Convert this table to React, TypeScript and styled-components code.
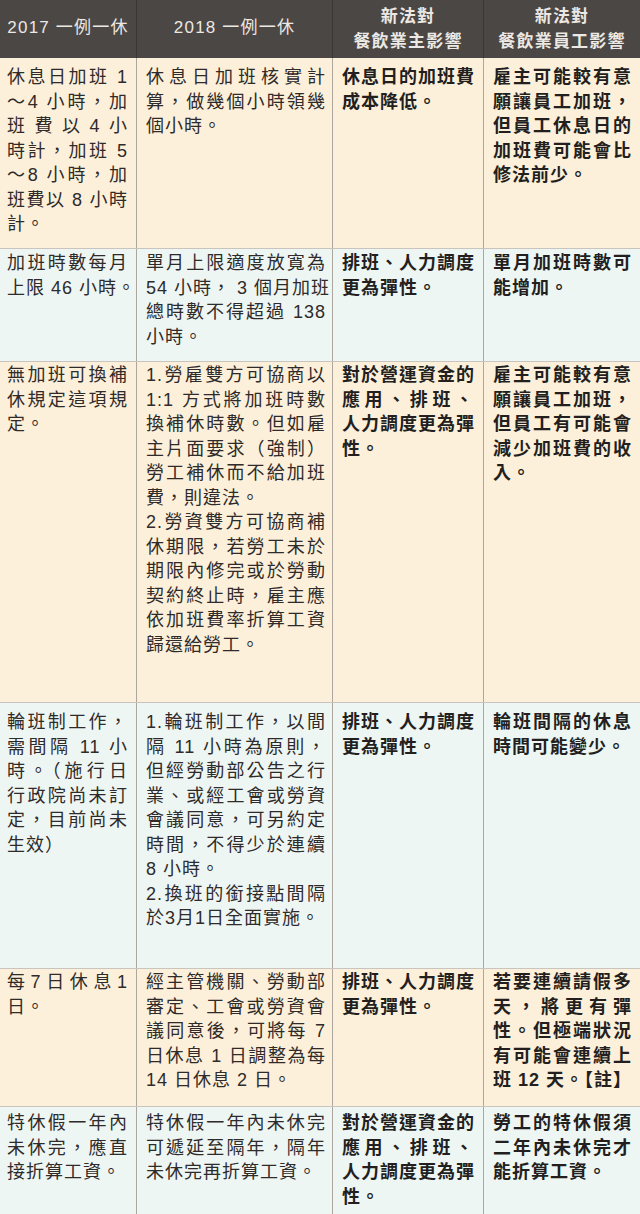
import React from "react";
import styled, { createGlobalStyle, css } from "styled-components";

const GlobalStyle = createGlobalStyle`
  html, body {
    margin: 0;
    padding: 0;
    background: #ffffff;
  }
  body {
    font-family: "Liberation Sans", "Noto Sans CJK TC", sans-serif;
  }
`;

type Tone = "peach" | "mint";

/* A cell is a list of paragraphs; a paragraph is a list of typeset lines. */
type Paragraph = string[];
type CellData = Paragraph[];

interface RowData {
  tone: Tone;
  height: number;
  padTop: number;
  cells: CellData[];
}

const COLS = "137px 196px 151px 156px";

const toneBg: Record<Tone, string> = {
  peach: "#fdf0da",
  mint: "#eef6f4",
};

const Table = styled.div`
  width: 640px;
  height: 1214px;
  overflow: hidden;
  display: flex;
  flex-direction: column;
  color: #2a2726;
`;

const HeaderRow = styled.div`
  display: grid;
  grid-template-columns: ${COLS};
  height: 58px;
  background: #4b4745;
  flex: none;
`;

const HeaderCell = styled.div`
  display: flex;
  flex-direction: column;
  align-items: center;
  justify-content: center;
  border-right: 1px solid #3a3736;
  color: #ece8e3;
  font-size: 17px;
  letter-spacing: 1.2px;
  &:last-child {
    border-right: none;
  }
`;

const HeaderLine = styled.div<{ $bold?: boolean }>`
  line-height: 25px;
  font-weight: ${(p) => (p.$bold ? 700 : 400)};
  white-space: nowrap;
`;

const SingleHeaderLine = styled(HeaderLine)`
  margin-top: -3px;
`;

const Body = styled.div`
  display: flex;
  flex-direction: column;
  flex: 1 0 auto;
`;

const Row = styled.div<{ $tone: Tone; $height: number; $fill?: boolean }>`
  display: grid;
  grid-template-columns: ${COLS};
  box-sizing: border-box;
  height: ${(p) => p.$height}px;
  background: ${(p) => toneBg[p.$tone]};
  border-top: 1px solid #c9c4bd;
  flex: ${(p) => (p.$fill ? "1 0 auto" : "none")};
  &:first-of-type {
    border-top: none;
  }
`;

const colPad = ["0 8px 0 7px", "0 6px 0 9px", "0 9px 0 9px", "0 8px 0 9px"];

const Cell = styled.div<{ $col: number; $padTop: number }>`
  box-sizing: border-box;
  padding: ${(p) => colPad[p.$col]};
  padding-top: ${(p) => p.$padTop}px;
  border-right: 1px solid #aca69e;
  font-size: 18px;
  line-height: 24.5px;
  letter-spacing: 1px;
  font-weight: ${(p) => (p.$col >= 2 ? 700 : 400)};
  color: ${(p) => (p.$col >= 2 ? "#221f1e" : "#2e2b2a")};
  &:last-child {
    border-right: none;
  }
`;

const Line = styled.div<{ $justify: boolean }>`
  white-space: nowrap;
  text-align: left;
  ${(p) =>
    p.$justify &&
    css`
      text-align: justify;
      text-align-last: justify;
    `}
`;

const rows: RowData[] = [
  {
    tone: "peach",
    height: 190,
    padTop: 7,
    cells: [
      [["休息日加班 1", "～4 小時，加", "班費以4小", "時計，加班 5", "～8 小時，加", "班費以 8 小時", "計。"]],
      [["休息日加班核實計", "算，做幾個小時領幾", "個小時。"]],
      [["休息日的加班費", "成本降低。"]],
      [["雇主可能較有意", "願讓員工加班，", "但員工休息日的", "加班費可能會比", "修法前少。"]],
    ],
  },
  {
    tone: "mint",
    height: 113,
    padTop: 2,
    cells: [
      [["加班時數每月", "上限 46 小時。"]],
      [["單月上限適度放寬為", "54 小時， 3 個月加班", "總時數不得超過 138", "小時。"]],
      [["排班、人力調度", "更為彈性。"]],
      [["單月加班時數可", "能增加。"]],
    ],
  },
  {
    tone: "peach",
    height: 341,
    padTop: 1,
    cells: [
      [["無加班可換補", "休規定這項規", "定。"]],
      [
        ["1.勞雇雙方可協商以", "1:1 方式將加班時數", "換補休時數。但如雇", "主片面要求（強制）", "勞工補休而不給加班", "費，則違法。"],
        ["2.勞資雙方可協商補", "休期限，若勞工未於", "期限內修完或於勞動", "契約終止時，雇主應", "依加班費率折算工資", "歸還給勞工。"],
      ],
      [["對於營運資金的", "應用、排班、", "人力調度更為彈", "性。"]],
      [["雇主可能較有意", "願讓員工加班，", "但員工有可能會", "減少加班費的收", "入。"]],
    ],
  },
  {
    tone: "mint",
    height: 266,
    padTop: 7,
    cells: [
      [["輪班制工作，", "需間隔 11 小", "時。（施行日", "行政院尚未訂", "定，目前尚未", "生效）"]],
      [
        ["1.輪班制工作，以間", "隔 11 小時為原則，", "但經勞動部公告之行", "業、或經工會或勞資", "會議同意，可另約定", "時間，不得少於連續", "8 小時。"],
        ["2.換班的銜接點間隔", "於3月1日全面實施。"],
      ],
      [["排班、人力調度", "更為彈性。"]],
      [["輪班間隔的休息", "時間可能變少。"]],
    ],
  },
  {
    tone: "peach",
    height: 138,
    padTop: 1,
    cells: [
      [["每7日休息1", "日。"]],
      [["經主管機關、勞動部", "審定、工會或勞資會", "議同意後，可將每 7", "日休息 1 日調整為每", "14 日休息 2 日。"]],
      [["排班、人力調度", "更為彈性。"]],
      [["若要連續請假多", "天，將更有彈", "性。但極端狀況", "有可能會連續上", "班 12 天。【註】"]],
    ],
  },
  {
    tone: "mint",
    height: 108,
    padTop: 4,
    cells: [
      [["特休假一年內", "未休完，應直", "接折算工資。"]],
      [["特休假一年內未休完", "可遞延至隔年，隔年", "未休完再折算工資。"]],
      [["對於營運資金的", "應用、排班、", "人力調度更為彈", "性。"]],
      [["勞工的特休假須", "二年內未休完才", "能折算工資。"]],
    ],
  },
];

export default function App() {
  return (
    <>
      <GlobalStyle />
      <Table>
        <HeaderRow>
          <HeaderCell>
            <SingleHeaderLine>2017 一例一休</SingleHeaderLine>
          </HeaderCell>
          <HeaderCell>
            <SingleHeaderLine>2018 一例一休</SingleHeaderLine>
          </HeaderCell>
          <HeaderCell>
            <HeaderLine $bold>新法對</HeaderLine>
            <HeaderLine $bold>餐飲業主影響</HeaderLine>
          </HeaderCell>
          <HeaderCell>
            <HeaderLine $bold>新法對</HeaderLine>
            <HeaderLine $bold>餐飲業員工影響</HeaderLine>
          </HeaderCell>
        </HeaderRow>
        <Body>
          {rows.map((row, ri) => (
            <Row key={ri} $tone={row.tone} $height={row.height} $fill={ri === rows.length - 1}>
              {row.cells.map((paragraphs, ci) => (
                <Cell key={ci} $col={ci} $padTop={row.padTop}>
                  {paragraphs.map((lines, pi) =>
                    lines.map((text, li) => (
                      <Line key={`${pi}-${li}`} $justify={li < lines.length - 1}>
                        {text}
                      </Line>
                    ))
                  )}
                </Cell>
              ))}
            </Row>
          ))}
        </Body>
      </Table>
    </>
  );
}
